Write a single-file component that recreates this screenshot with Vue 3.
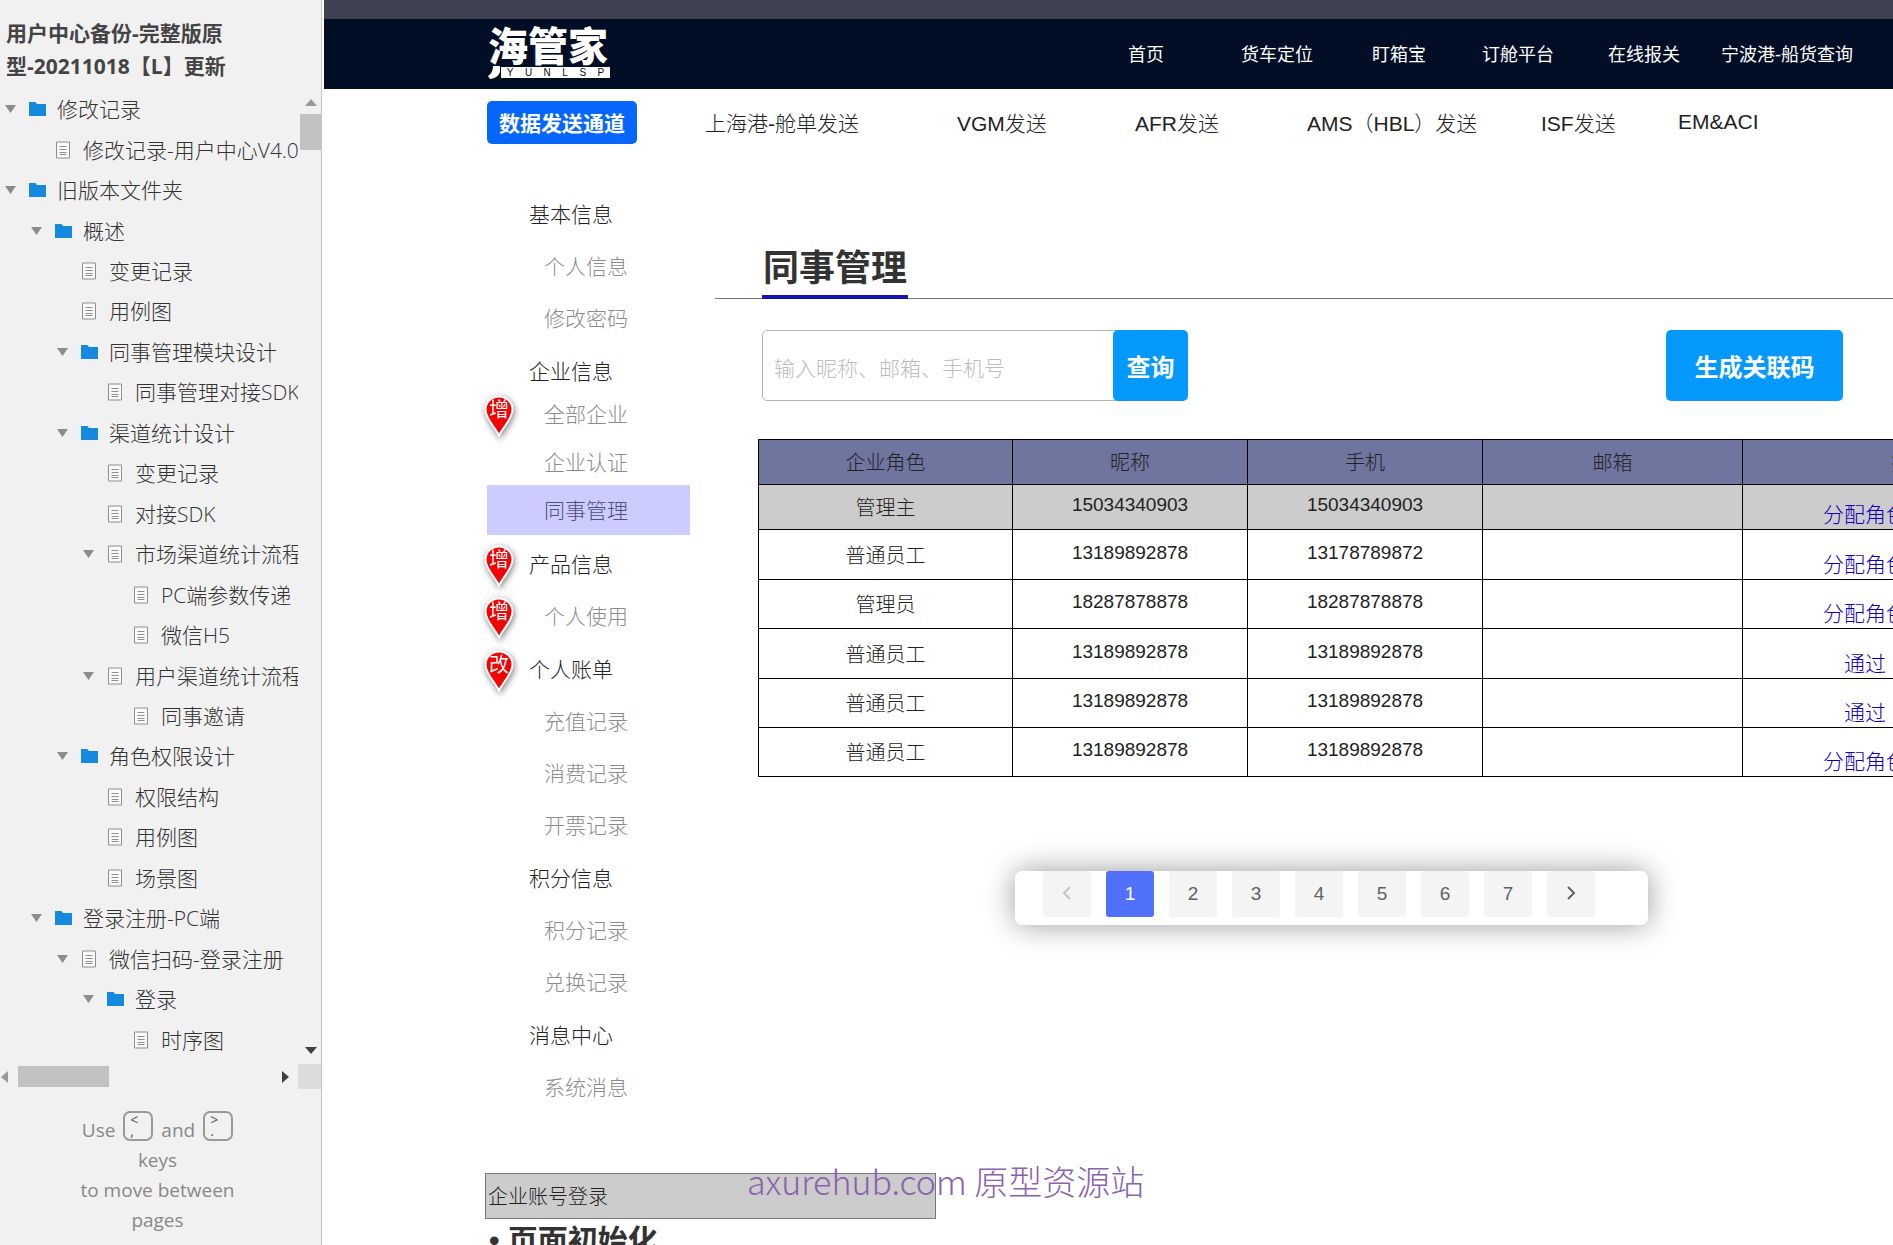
<script setup>
import { ref } from 'vue'

const tree = [
  { level: 0, open: true, icon: 'folder', label: '修改记录' },
  { level: 1, icon: 'page', label: '修改记录-用户中心V4.0' },
  { level: 0, open: true, icon: 'folder', label: '旧版本文件夹' },
  { level: 1, open: true, icon: 'folder', label: '概述' },
  { level: 2, icon: 'page', label: '变更记录' },
  { level: 2, icon: 'page', label: '用例图' },
  { level: 2, open: true, icon: 'folder', label: '同事管理模块设计' },
  { level: 3, icon: 'page', label: '同事管理对接SDK' },
  { level: 2, open: true, icon: 'folder', label: '渠道统计设计' },
  { level: 3, icon: 'page', label: '变更记录' },
  { level: 3, icon: 'page', label: '对接SDK' },
  { level: 3, open: true, icon: 'page', label: '市场渠道统计流程' },
  { level: 4, icon: 'page', label: 'PC端参数传递' },
  { level: 4, icon: 'page', label: '微信H5' },
  { level: 3, open: true, icon: 'page', label: '用户渠道统计流程' },
  { level: 4, icon: 'page', label: '同事邀请' },
  { level: 2, open: true, icon: 'folder', label: '角色权限设计' },
  { level: 3, icon: 'page', label: '权限结构' },
  { level: 3, icon: 'page', label: '用例图' },
  { level: 3, icon: 'page', label: '场景图' },
  { level: 1, open: true, icon: 'folder', label: '登录注册-PC端' },
  { level: 2, open: true, icon: 'page', label: '微信扫码-登录注册' },
  { level: 3, open: true, icon: 'folder', label: '登录' },
  { level: 4, icon: 'page', label: '时序图' },
]

const siteLinks = ['首页', '货车定位', '盯箱宝', '订舱平台', '在线报关', '宁波港-船货查询']
const channels = ['上海港-舱单发送', 'VGM发送', 'AFR发送', 'AMS（HBL）发送', 'ISF发送', 'EM&ACI']

const menu = [
  { title: true, label: '基本信息' },
  { label: '个人信息' },
  { label: '修改密码' },
  { title: true, label: '企业信息' },
  { label: '全部企业', pin: '增', kind: 'first' },
  { label: '企业认证', kind: 'near' },
  { label: '同事管理', kind: 'active' },
  { title: true, label: '产品信息', pin: '增' },
  { label: '个人使用', pin: '增' },
  { title: true, label: '个人账单', pin: '改' },
  { label: '充值记录' },
  { label: '消费记录' },
  { label: '开票记录' },
  { title: true, label: '积分信息' },
  { label: '积分记录' },
  { label: '兑换记录' },
  { title: true, label: '消息中心' },
  { label: '系统消息' },
]

const members = [
  { role: '管理主', nick: '15034340903', phone: '15034340903', action: '分配角色' },
  { role: '普通员工', nick: '13189892878', phone: '13178789872', action: '分配角色' },
  { role: '管理员', nick: '18287878878', phone: '18287878878', action: '分配角色' },
  { role: '普通员工', nick: '13189892878', phone: '13189892878', action: '通过' },
  { role: '普通员工', nick: '13189892878', phone: '13189892878', action: '通过' },
  { role: '普通员工', nick: '13189892878', phone: '13189892878', action: '分配角色' },
]

const keyword = ref('')
const page = ref(1)
</script>

<template>
  <div class="app">
    <aside class="sidebar">
      <h2 class="project">用户中心备份-完整版原型-20211018【L】更新</h2>
      <div class="tree-area">
        <ul class="tree">
          <li v-for="(node, i) in tree" :key="i" class="node" :style="{ paddingLeft: 5 + node.level * 26 + 'px' }">
            <svg class="caret" viewBox="0 0 11 8"><path v-if="node.open" d="M0 0h11L5.5 8z" fill="#8c8c8c" /></svg>
            <svg v-if="node.icon === 'folder'" class="icon" viewBox="0 0 18 18">
              <path d="M1 2h6.500l1.500 2H18v12H1z" fill="#1489dd" />
            </svg>
            <svg v-else class="icon" viewBox="0 0 18 18">
              <path d="M2.500 1h13v16h-13z" fill="#fafafa" stroke="#8e8e8e" />
              <path d="M5.500 5.500h7M5.500 8.500h7M5.500 11.500h7M5.500 13.500h7" stroke="#8e8e8e" />
            </svg>
            <a href="#">{{ node.label }}</a>
          </li>
        </ul>
        <div class="vbar">
          <svg viewBox="0 0 12 7"><path d="M6 0l6 7H0z" fill="#9a9a9a" /></svg>
          <span class="vthumb"></span>
          <svg class="down" viewBox="0 0 12 7"><path d="M6 7L0 0h12z" fill="#404040" /></svg>
        </div>
      </div>
      <div class="hbar">
        <svg viewBox="0 0 7 12"><path d="M0 6l7-6v12z" fill="#9a9a9a" /></svg>
        <span class="hthumb"></span>
        <svg class="right" viewBox="0 0 7 12"><path d="M7 6L0 0v12z" fill="#404040" /></svg>
        <span class="corner"></span>
      </div>
      <div class="hint">
        <p class="hint-keys">
          <span>Use</span><kbd><i>&lt;</i><i>,</i></kbd><span>and</span><kbd><i>&gt;</i><i>.</i></kbd>
        </p>
        <p>keys</p>
        <p>to move between</p>
        <p>pages</p>
      </div>
    </aside>

    <main class="stage">
      <div class="strip"></div>
      <header class="topbar">
        <div class="logo">
          <svg class="logo-hook" viewBox="0 0 12 13"><path d="M5 0h7v6q-2 6-10 7l-2-3q5-3 5-10z" fill="#fff" /></svg>
          <span class="logo-name">海管家</span>
          <span class="logo-bar"><b v-for="c in 'YUNLSP'" :key="c">{{ c }}</b></span>
        </div>
        <nav class="site-nav">
          <a v-for="l in siteLinks" :key="l" href="#">{{ l }}</a>
        </nav>
      </header>

      <nav class="channels">
        <button type="button" class="channel-btn">数据发送通道</button>
        <a v-for="c in channels" :key="c" href="#">{{ c }}</a>
      </nav>

      <div class="body">
        <ul class="menu">
          <li v-for="m in menu" :key="m.label" :class="[m.title ? 'group' : 'sub', m.kind]">
            <a href="#">{{ m.label }}</a>
            <span v-if="m.pin" class="pin">
              <svg viewBox="0 0 30 42">
                <path d="M15 40.500C11 32 1.500 24 1.500 14.500a13.500 13 0 0 1 27 0C28.500 24 19 32 15 40.500z" fill="#f20505" stroke="#fff" stroke-width="2" />
              </svg>
              <em>{{ m.pin }}</em>
            </span>
          </li>
        </ul>

        <section class="content">
          <div class="heading"><h1>同事管理</h1></div>
          <form class="tools" @submit.prevent>
            <input v-model="keyword" type="text" aria-label="搜索" placeholder="输入昵称、邮箱、手机号" />
            <button type="submit" class="query">查询</button>
            <button type="button" class="generate">生成关联码</button>
          </form>

          <table class="members">
            <colgroup><col class="c1" /><col class="c2" /><col class="c3" /><col class="c4" /><col /></colgroup>
            <thead>
              <tr><th>企业角色</th><th>昵称</th><th>手机</th><th>邮箱</th><th>操作</th></tr>
            </thead>
            <tbody>
              <tr v-for="(m, i) in members" :key="i">
                <td>{{ m.role }}</td>
                <td class="num">{{ m.nick }}</td>
                <td class="num">{{ m.phone }}</td>
                <td></td>
                <td class="action" :class="{ review: m.action === '通过' }"><a href="#">{{ m.action }}</a></td>
              </tr>
            </tbody>
          </table>

          <nav class="pager" aria-label="分页">
            <button type="button" aria-label="上一页" disabled>
              <svg viewBox="0 0 10 14"><path d="M8 1L2 7l6 6" fill="none" stroke="#c0c4cc" stroke-width="2" /></svg>
            </button>
            <button v-for="n in 7" :key="n" type="button" :class="{ on: n === page }" @click="page = n">{{ n }}</button>
            <button type="button" aria-label="下一页">
              <svg viewBox="0 0 10 14"><path d="M2 1l6 6-6 6" fill="none" stroke="#606266" stroke-width="2" /></svg>
            </button>
          </nav>
        </section>
      </div>

      <div class="note">企业账号登录</div>
      <h2 class="note-title">• 页面初始化</h2>
    </main>

    <p class="watermark">axurehub.com 原型资源站</p>
  </div>
</template>

<style>
body {
  margin: 0;
  overflow: hidden;
}
</style>

<style scoped>
.app {
  position: relative;
  display: flex;
  height: 100vh;
  overflow: hidden;
  background: #fff;
  color: #222;
  font-family: "Liberation Sans", "Noto Sans CJK SC", sans-serif;
  font-size: 21px;
  font-weight: 300;
}
a {
  color: inherit;
  text-decoration: none;
}
ul,
p,
h1,
h2 {
  margin: 0;
  padding: 0;
  list-style: none;
}
button {
  padding: 0;
  border: 0;
  font-family: inherit;
}

/* page tree */
.sidebar {
  display: flex;
  flex: none;
  flex-direction: column;
  box-sizing: border-box;
  width: 322px;
  margin-right: 2px;
  border-right: 1px solid #c4c4c4;
  background: #f1f1f1;
  color: #333;
  font-family: "Open Sans", "Noto Sans CJK SC", sans-serif;
}
.project {
  padding: 17px 70px 6px 6px;
  color: #444;
  font-size: 21px;
  font-weight: 700;
  line-height: 33px;
}
.tree-area {
  display: flex;
  flex: 1;
  min-height: 0;
}
.tree {
  display: flex;
  flex: 1;
  flex-direction: column;
  min-width: 0;
  margin-bottom: 4px;
  overflow: hidden;
}
.node {
  display: flex;
  flex: 1;
  align-items: center;
  min-height: 0;
  white-space: nowrap;
}
.node a {
  line-height: 30px;
}
.caret {
  flex: none;
  width: 11px;
  height: 8px;
  margin-right: 12px;
}
.icon {
  flex: none;
  width: 18px;
  height: 18px;
  margin-right: 11px;
}
.vbar {
  display: flex;
  flex: none;
  flex-direction: column;
  align-items: center;
  width: 21px;
  margin-left: 2px;
  padding: 10px 0;
}
.vbar svg {
  width: 12px;
  height: 7px;
}
.vthumb {
  width: 21px;
  height: 36px;
  margin-top: 8px;
  background: #c1c1c1;
}
.vbar .down {
  margin-top: auto;
}
.hbar {
  display: flex;
  flex: none;
  align-items: center;
  height: 25px;
}
.hbar svg {
  width: 7px;
  height: 12px;
  margin-left: 1px;
}
.hthumb {
  width: 91px;
  height: 21px;
  margin-left: 10px;
  background: #c1c1c1;
}
.hbar .right {
  margin-left: auto;
  margin-right: 9px;
}
.corner {
  width: 23px;
  height: 25px;
  background: #dcdcdc;
}
.hint {
  padding: 22px 6px 10px 0;
  color: #888;
  font-size: 19px;
  font-weight: 400;
  line-height: 30px;
  text-align: center;
}
.hint-keys {
  display: flex;
  align-items: flex-end;
  justify-content: center;
  gap: 8px;
  margin-bottom: 4px;
}
.hint-keys span {
  margin-bottom: -4px;
}
kbd {
  display: flex;
  flex-direction: column;
  box-sizing: border-box;
  width: 30px;
  height: 30px;
  padding: 1px 5px;
  border: 2px solid #999;
  border-radius: 7px;
  font-family: inherit;
  font-size: 14px;
  line-height: 11px;
  text-align: left;
}
kbd i {
  color: #555;
  font-style: normal;
}

/* prototype canvas */
.stage {
  flex: 1;
  min-width: 0;
  overflow: hidden;
}
.strip {
  height: 19px;
  background: #3f4050;
}
.topbar {
  display: flex;
  align-items: flex-start;
  height: 70px;
  padding-left: 164px;
  background: #010e26;
}
.logo {
  position: relative;
  width: 122px;
  margin-top: 9px;
  color: #fff;
}
.logo-name {
  display: block;
  font-size: 40px;
  font-weight: 900;
  line-height: 39px;
}
.logo-hook {
  position: absolute;
  bottom: -1px;
  left: 0;
  width: 12px;
  height: 13px;
}
.logo-bar {
  display: flex;
  align-items: center;
  justify-content: space-around;
  height: 11px;
  margin-left: 13px;
  background: #fff;
  color: #010e26;
  font-size: 10px;
  line-height: 11px;
}
.site-nav {
  display: grid;
  grid-template-columns: 113px 131px 110px 126px 113px auto;
  margin-left: 518px;
  color: #fff;
  font-size: 18px;
  font-weight: 400;
  line-height: 72px;
  white-space: nowrap;
}
.channels {
  display: grid;
  grid-template-columns: 218px 252px 178px 172px 234px 137px auto;
  align-items: center;
  height: 66px;
  padding-left: 163px;
  white-space: nowrap;
}
.channel-btn {
  width: 150px;
  height: 43px;
  border-radius: 5px;
  background: #0666fb;
  color: #fff;
  font-size: 21px;
  font-weight: 700;
}
.body {
  display: flex;
  padding: 32px 0 0 163px;
}
.menu {
  flex: none;
  width: 203px;
  margin-right: 25px;
}
.menu li {
  position: relative;
  display: flex;
  align-items: center;
  box-sizing: border-box;
  padding-bottom: 2px;
}
.menu .group {
  height: 53px;
  padding-left: 42px;
}
.menu .sub {
  height: 52px;
  padding-left: 57px;
  color: #8c8c8c;
}
.menu .first {
  height: 34px;
  margin-bottom: 8px;
}
.menu .near {
  height: 46px;
}
.menu .active {
  height: 50px;
  margin-bottom: 2px;
  background: #ccccff;
  color: #50507a;
}
.pin {
  position: absolute;
  top: calc(50% - 19px);
  left: -3px;
  width: 30px;
  height: 42px;
  filter: drop-shadow(1px 2px 3px rgba(0, 0, 0, 0.5));
}
.pin svg {
  display: block;
  width: 30px;
  height: 42px;
}
.pin em {
  position: absolute;
  inset: 0;
  color: #fff;
  font-size: 20px;
  font-style: normal;
  font-weight: 400;
  line-height: 30px;
  text-align: center;
}
.content {
  flex: 1;
  min-width: 0;
  padding-top: 56px;
}
.heading {
  display: flex;
  padding-left: 47px;
  border-bottom: 1px solid #777;
}
.heading h1 {
  margin-bottom: -1px;
  padding: 2px 1px;
  border-bottom: 4px solid #1515b4;
  color: #333;
  font-size: 36px;
  font-weight: 700;
  line-height: 48px;
}
.tools {
  display: flex;
  height: 71px;
  margin: 31px 50px 0 47px;
}
.tools input {
  box-sizing: border-box;
  width: 360px;
  padding: 6px 11px 0;
  border: 1px solid #b4b4b4;
  border-radius: 5px;
  background: #fff;
  color: #333;
  font: inherit;
}
.tools input::placeholder {
  color: #bcbcbc;
}
.tools button {
  border-radius: 5px;
  background: #0598fd;
  color: #fff;
  font-size: 24px;
  font-weight: 700;
}
.query {
  width: 75px;
  margin-left: -9px;
}
.generate {
  width: 177px;
  margin-left: auto;
}
.members {
  width: 1322px;
  margin: 38px 0 0 43px;
  border-collapse: collapse;
  table-layout: fixed;
  font-size: 20px;
  text-align: center;
}
.c1 {
  width: 254px;
}
.c2,
.c3 {
  width: 235px;
}
.c4 {
  width: 260px;
}
.members th,
.members td {
  box-sizing: border-box;
  height: 49px;
  padding: 2px 0 0;
  border: 1px solid #000;
  font-weight: 300;
  line-height: 30px;
}
.members th {
  height: 45px;
  background: #6e759f;
}
.members tbody tr:first-child td {
  height: 45px;
  background: #ccc;
}
.members tbody tr:nth-child(even):not(:last-child) td {
  height: 50px;
}
.members .num {
  padding: 0 0 4px;
  font-size: 19px;
}
.members .action {
  padding-left: 80px;
  color: #1000bc;
  font-size: 21px;
  line-height: 28px;
  text-align: left;
  vertical-align: bottom;
}
.members .review {
  padding-left: 101px;
}
.pager {
  display: flex;
  gap: 15px;
  box-sizing: border-box;
  width: 633px;
  height: 54px;
  margin: 94px 0 0 300px;
  padding-left: 28px;
  border-radius: 7px;
  background: #fff;
  box-shadow: 0 0 30px rgba(0, 0, 0, 0.4);
}
.pager button {
  width: 48px;
  height: 46px;
  border-radius: 3px;
  background: #f4f4f4;
  color: #606266;
  font-size: 19px;
}
.pager .on {
  background: #5271fb;
  color: #fff;
}
.pager svg {
  width: 10px;
  height: 14px;
}
.note {
  box-sizing: border-box;
  width: 451px;
  height: 46px;
  margin: 60px 0 0 161px;
  padding-left: 2px;
  border: 1px solid #777;
  background: #ccc;
  font-size: 20px;
  line-height: 46px;
}
.note-title {
  margin-left: 165px;
  color: #333;
  font-size: 30px;
  font-weight: 700;
  line-height: 44px;
}
.watermark {
  position: absolute;
  bottom: 41px;
  left: 747px;
  color: #8a62ae;
  font-family: "Noto Sans CJK SC", sans-serif;
  font-size: 34px;
  line-height: 46px;
}
</style>
